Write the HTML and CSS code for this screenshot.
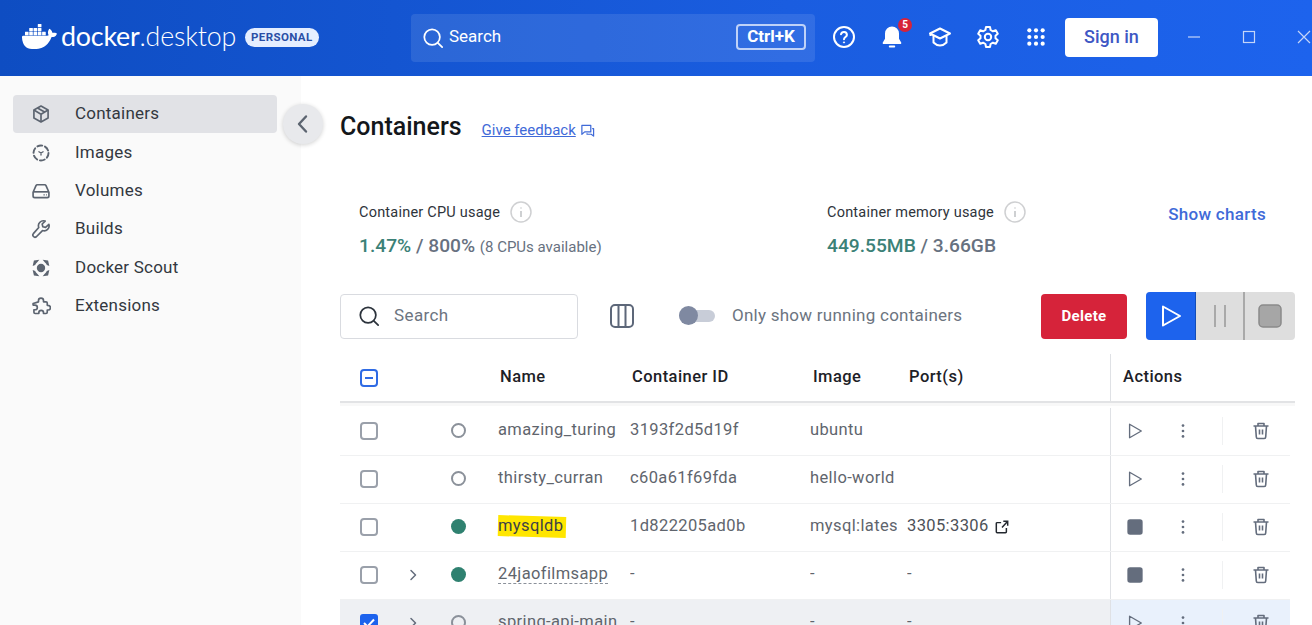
FILE: index.html
```html
<!DOCTYPE html>
<html lang="en">
<head>
<meta charset="utf-8">
<title>Docker Desktop</title>
<link rel="stylesheet" href="styles.css">
</head>
<body>
<header class="topbar">
  <div class="brand">
    <svg class="whale" viewBox="0 0 24 24"><path fill="#fff" d="M13.983 11.078h2.119a.186.186 0 00.186-.185V9.006a.186.186 0 00-.186-.186h-2.119a.185.185 0 00-.185.185v1.888c0 .102.083.185.185.185m-2.954-5.43h2.118a.186.186 0 00.186-.186V3.574a.186.186 0 00-.186-.185h-2.118a.185.185 0 00-.185.185v1.888c0 .102.082.185.185.185m0 2.716h2.118a.187.187 0 00.186-.186V6.29a.186.186 0 00-.186-.185h-2.118a.185.185 0 00-.185.185v1.887c0 .102.082.185.185.186m-2.93 0h2.12a.186.186 0 00.184-.186V6.29a.185.185 0 00-.185-.185H8.1a.185.185 0 00-.185.185v1.887c0 .102.083.185.185.186m-2.964 0h2.119a.186.186 0 00.185-.186V6.29a.185.185 0 00-.185-.185H5.136a.186.186 0 00-.186.185v1.887c0 .102.084.185.186.186m5.893 2.715h2.118a.186.186 0 00.186-.185V9.006a.186.186 0 00-.186-.186h-2.118a.185.185 0 00-.185.185v1.888c0 .102.082.185.185.185m-2.93 0h2.12a.185.185 0 00.184-.185V9.006a.185.185 0 00-.184-.186h-2.12a.185.185 0 00-.184.185v1.888c0 .102.083.185.185.185m-2.964 0h2.119a.185.185 0 00.185-.185V9.006a.185.185 0 00-.184-.186h-2.12a.186.186 0 00-.186.186v1.887c0 .102.084.185.186.185m-2.92 0h2.12a.185.185 0 00.184-.185V9.006a.185.185 0 00-.184-.186h-2.12a.185.185 0 00-.184.185v1.888c0 .102.082.185.185.185M23.763 9.89c-.065-.051-.672-.51-1.954-.51-.338.001-.676.03-1.01.087-.248-1.7-1.653-2.53-1.716-2.566l-.344-.199-.226.327c-.284.438-.49.922-.612 1.43-.23.97-.09 1.882.403 2.661-.595.332-1.55.413-1.744.42H.751a.751.751 0 00-.75.748 11.376 11.376 0 00.692 4.062c.545 1.428 1.355 2.48 2.41 3.124 1.18.723 3.1 1.137 5.275 1.137.983.003 1.963-.086 2.93-.266a12.248 12.248 0 003.823-1.389c.98-.567 1.86-1.288 2.61-2.136 1.252-1.418 1.998-2.997 2.553-4.4h.221c1.372 0 2.215-.549 2.68-1.009.309-.293.55-.65.707-1.046l.098-.288Z"/></svg>
    <span class="wordmark"><span class="wordmark-strong">docker</span>.desktop</span>
    <span class="plan">PERSONAL</span>
  </div>
  <div class="global-search">
    <svg class="ico-22" viewBox="0 0 24 24" fill="none" stroke="#fff" stroke-width="1.9"><circle cx="11" cy="11" r="8.500"/><path d="M17.500 17.500l4.500 4.500" stroke-linecap="round"/></svg>
    <span class="global-search-label">Search</span>
    <span class="kbd">Ctrl+K</span>
  </div>
  <div class="top-icons">
    <span class="top-icon"><svg class="ico-24" viewBox="0 0 24 24" fill="none" stroke="#fff" stroke-width="2"><circle cx="12" cy="12" r="10"/><path d="M9 9.300a3 3 0 0 1 5.900.6c0 2-2.900 2.400-2.900 4.400" stroke-linecap="round"/><circle cx="12" cy="17.400" r=".6" fill="#fff" stroke-width="1"/></svg></span>
    <span class="top-icon"><svg class="ico-24" viewBox="0 0 24 24" fill="#fff"><path d="M12 1.500a7 7 0 0 0-7 7v5.200L2.800 17.400c-.4.7 0 1.600.9 1.600h16.600c.9 0 1.300-.9.9-1.600L19 13.700V8.500a7 7 0 0 0-7-7z"/><rect x="8.800" y="20.600" width="6.400" height="1.800" rx=".9"/></svg><span class="bell-badge">5</span></span>
    <span class="top-icon"><svg class="ico-24" viewBox="0 0 24 24" fill="none" stroke="#fff" stroke-width="2" stroke-linejoin="round"><path d="M12 3.500L22 8.500 12 13.500 2 8.500z"/><path d="M5.500 11v6.500c2 2 4.200 3 6.500 3s4.500-1 6.500-3V11"/><path d="M2.500 8.500L2.500 11"/></svg></span>
    <span class="top-icon"><svg class="ico-24" viewBox="0 0 24 24" fill="none" stroke="#fff" stroke-width="2" stroke-linejoin="round"><circle cx="12" cy="12" r="3.200"/><path d="M10 2h4l.6 3 2.300 1.300 2.900-1 2 3.500-2.300 2v2.400l2.300 2-2 3.500-2.900-1-2.300 1.300-.6 3h-4l-.6-3-2.300-1.300-2.900 1-2-3.500 2.300-2v-2.400l-2.300-2 2-3.500 2.900 1L9.400 5z"/></svg></span>
    <span class="top-icon"><svg class="ico-20" viewBox="0 0 24 24" fill="#fff"><circle cx="4" cy="4" r="2.500"/><circle cx="12" cy="4" r="2.500"/><circle cx="20" cy="4" r="2.500"/><circle cx="4" cy="12" r="2.500"/><circle cx="12" cy="12" r="2.500"/><circle cx="20" cy="12" r="2.500"/><circle cx="4" cy="20" r="2.500"/><circle cx="12" cy="20" r="2.500"/><circle cx="20" cy="20" r="2.500"/></svg></span>
  </div>
  <button class="signin">Sign in</button>
  <div class="window-controls">
    <span class="win"><svg class="ico-14" viewBox="0 0 14 14" stroke="#c4d5f8" stroke-width="1.200"><path d="M1 7h12"/></svg></span>
    <span class="win"><svg class="ico-14" viewBox="0 0 14 14" fill="none" stroke="#c4d5f8" stroke-width="1.200"><rect x="1.500" y="1.500" width="11" height="11"/></svg></span>
    <span class="win"><svg class="ico-14" viewBox="0 0 14 14" stroke="#c4d5f8" stroke-width="1.200"><path d="M1 1l12 12M13 1L1 13"/></svg></span>
  </div>
</header>

<div class="shell">
  <nav class="sidebar">
    <a class="nav-item nav-active"><svg class="nav-ico" viewBox="0 0 24 24" fill="none" stroke="#5c6470" stroke-width="2" stroke-linejoin="round"><path d="M12 2.500l8.500 4.700v9.600L12 21.500l-8.500-4.700V7.200z"/><path d="M3.500 7.200l8.500 5 8.500-5M12 12.200v9.300M7.800 4.900l8.500 4.800"/></svg><span class="nav-label">Containers</span></a>
    <a class="nav-item"><svg class="nav-ico" viewBox="0 0 24 24" fill="none" stroke="#5c6470" stroke-width="2.300" stroke-linecap="round"><circle cx="12" cy="12" r="9" stroke-dasharray="6 3.420"/><path d="M9.500 10.500l2.500 1.500 2.500-1.500M12 12v2.500" stroke-width="1.600"/></svg><span class="nav-label">Images</span></a>
    <a class="nav-item"><svg class="nav-ico" viewBox="0 0 24 24" fill="none" stroke="#5c6470" stroke-width="2" stroke-linejoin="round"><path d="M2.500 13.500L6 5.500c.3-.6.800-1 1.500-1h9c.7 0 1.200.4 1.500 1l3.500 8v4.500a2 2 0 0 1-2 2h-15a2 2 0 0 1-2-2z"/><path d="M2.500 13h19"/><path d="M15 16.500h1.500M18 16.500h1" stroke-width="1.500"/></svg><span class="nav-label">Volumes</span></a>
    <a class="nav-item"><svg class="nav-ico" viewBox="0 0 24 24" fill="none" stroke="#5c6470" stroke-width="2" stroke-linejoin="round"><path d="M21.500 6.500l-4 3.600-3.300-.8-.8-3.300 3.600-3.500a6 6 0 0 0-7.700 7.700L2.800 17.600a2.600 2.600 0 0 0 3.600 3.700l7.400-7.400a6 6 0 0 0 7.700-7.400z"/></svg><span class="nav-label">Builds</span></a>
    <a class="nav-item"><svg class="nav-ico" viewBox="0 0 24 24" fill="#5c6470"><circle cx="12" cy="12" r="5"/><path d="M2 9.500L3.500 3 10 2 7.500 5 6 6.500 5 8.500zM22 9.500L20.500 3 14 2l2.500 3L18 6.500l1 2zM2 14.500L3.500 21l6.500 1-2.500-3L6 17.500l-1-2zM22 14.500L20.500 21 14 22l2.500-3 1.500-1.500 1-2z"/></svg><span class="nav-label">Docker Scout</span></a>
    <a class="nav-item"><svg class="nav-ico" viewBox="0 0 24 24" fill="none" stroke="#5c6470" stroke-width="2" stroke-linejoin="round"><path d="M9 5.500a3 3 0 0 1 6 0V7h3a1.500 1.500 0 0 1 1.500 1.500v2.700h1a2.800 2.800 0 0 1 0 5.600h-1v2.700A1.500 1.500 0 0 1 18 21h-3v-1a2.800 2.800 0 0 0-5.600 0v1H5a1.500 1.500 0 0 1-1.500-1.500v-3h1.300a2.800 2.800 0 0 0 0-5.600H2.500V9L9 7z"/></svg><span class="nav-label">Extensions</span></a>
  </nav>

  <button class="collapse"><svg class="ico-24" viewBox="0 0 24 24" fill="none" stroke="#5c6470" stroke-width="2.400" stroke-linecap="round" stroke-linejoin="round"><path d="M15 4.500L8 12l7 7.500"/></svg></button>

  <main class="content">
    <div class="title-row">
      <h1 class="page-title">Containers</h1>
      <a class="feedback">Give feedback</a>
      <svg class="feedback-ico" viewBox="0 0 16 16" fill="none" stroke="#3f6ad8" stroke-width="1.300" stroke-linejoin="round"><path d="M2 2.500h9.500v7H5L2 12z"/><path d="M13 6h1.500v8L12 12H7.500v-1"/></svg>
    </div>

    <section class="stats">
      <div class="stat stat-cpu">
        <div class="stat-label">Container CPU usage <svg class="info" viewBox="0 0 22 22" fill="none"><circle cx="11" cy="11" r="10" stroke="#cfd0d2" stroke-width="1.500"/><path d="M11 10v6M11 6.500v1" stroke="#bfc1c4" stroke-width="1.500"/></svg></div>
        <div class="stat-value"><span class="good">1.47%</span> <span class="slash">/ 800%</span> <small class="stat-note">(8 CPUs available)</small></div>
      </div>
      <div class="stat stat-mem">
        <div class="stat-label">Container memory usage <svg class="info" viewBox="0 0 22 22" fill="none"><circle cx="11" cy="11" r="10" stroke="#cfd0d2" stroke-width="1.500"/><path d="M11 10v6M11 6.500v1" stroke="#bfc1c4" stroke-width="1.500"/></svg></div>
        <div class="stat-value"><span class="good">449.55MB</span> <span class="slash">/ 3.66GB</span></div>
      </div>
      <a class="show-charts">Show charts</a>
    </section>

    <section class="toolbar">
      <div class="search-box">
        <svg class="ico-22" viewBox="0 0 24 24" fill="none" stroke="#2c333c" stroke-width="1.900"><circle cx="11" cy="11" r="8.500"/><path d="M17.500 17.500l4.500 4.500" stroke-linecap="round"/></svg>
        <span class="search-placeholder">Search</span>
      </div>
      <svg class="columns-ico" viewBox="0 0 24 24" fill="none" stroke="#5d6779" stroke-width="2"><rect x="1" y="1" width="22" height="22" rx="4"/><path d="M8.500 1v22M15.500 1v22"/></svg>
      <span class="toggle"><span class="toggle-thumb"></span></span>
      <span class="toggle-label">Only show running containers</span>
      <button class="delete">Delete</button>
      <div class="bulk">
        <span class="bulk-btn bulk-play"><svg class="ico-24" viewBox="0 0 24 24" fill="none" stroke="#fff" stroke-width="2" stroke-linejoin="round"><path d="M4 2.500L21 12 4 21.500z"/></svg></span>
        <span class="bulk-btn bulk-pause"><svg class="ico-24" viewBox="0 0 24 24" stroke="#a9a9a9" stroke-width="2"><path d="M7 1v22M17 1v22"/></svg></span>
        <span class="bulk-btn"><svg class="ico-24" viewBox="0 0 24 24" fill="#a6a6a6" stroke="#8a8a8a" stroke-width="1.500"><rect x="1" y="1" width="22" height="22" rx="4"/></svg></span>
      </div>
    </section>

    <section class="table">
      <div class="t-row t-head">
        <span class="cell-check"><svg class="check" viewBox="0 0 18 18" fill="none"><rect x="1" y="1" width="16" height="16" rx="3" stroke="#2f6be4" stroke-width="2"/><path d="M5 9h8" stroke="#2f6be4" stroke-width="2"/></svg></span>
        <span></span><span></span>
        <span class="th th-name">Name</span>
        <span class="th">Container ID</span>
        <span class="th th-image">Image</span>
        <span class="th">Port(s)</span>
        <span class="th th-actions">Actions</span>
      </div>

      <div class="t-row t-body">
        <span class="cell-check"><svg class="check" viewBox="0 0 18 18" fill="none"><rect x="1" y="1" width="16" height="16" rx="3" stroke="#9aa0aa" stroke-width="2"/></svg></span>
        <span></span>
        <span class="cell-status"><span class="dot dot-off"></span></span>
        <span class="td td-name">amazing_turing</span>
        <span class="td">3193f2d5d19f</span>
        <span class="td td-image">ubuntu</span>
        <span class="td"></span>
        <span class="cell-actions">
          <svg class="act" viewBox="0 0 20 20" fill="none" stroke="#646d7d" stroke-width="1.500" stroke-linejoin="round"><path d="M4 2.500L17 10 4 17.500z"/></svg>
          <svg class="act act-more" viewBox="0 0 20 20" fill="#646d7d"><circle cx="10" cy="4" r="1.500"/><circle cx="10" cy="10" r="1.500"/><circle cx="10" cy="16" r="1.500"/></svg>
          <span class="act-sep"></span>
          <svg class="act act-trash" viewBox="0 0 20 20" fill="none" stroke="#646d7d" stroke-width="1.600" stroke-linejoin="round"><path d="M2.500 5h15M7 5V2.500h6V5M4.500 5l.8 11c0 1 .7 1.500 1.500 1.500h6.400c.8 0 1.500-.5 1.500-1.500l.8-11M8.500 8.500v5M11.500 8.500v5"/></svg>
        </span>
      </div>

      <div class="t-row t-body">
        <span class="cell-check"><svg class="check" viewBox="0 0 18 18" fill="none"><rect x="1" y="1" width="16" height="16" rx="3" stroke="#9aa0aa" stroke-width="2"/></svg></span>
        <span></span>
        <span class="cell-status"><span class="dot dot-off"></span></span>
        <span class="td td-name">thirsty_curran</span>
        <span class="td">c60a61f69fda</span>
        <span class="td td-image">hello-world</span>
        <span class="td"></span>
        <span class="cell-actions">
          <svg class="act" viewBox="0 0 20 20" fill="none" stroke="#646d7d" stroke-width="1.500" stroke-linejoin="round"><path d="M4 2.500L17 10 4 17.500z"/></svg>
          <svg class="act act-more" viewBox="0 0 20 20" fill="#646d7d"><circle cx="10" cy="4" r="1.500"/><circle cx="10" cy="10" r="1.500"/><circle cx="10" cy="16" r="1.500"/></svg>
          <span class="act-sep"></span>
          <svg class="act act-trash" viewBox="0 0 20 20" fill="none" stroke="#646d7d" stroke-width="1.600" stroke-linejoin="round"><path d="M2.500 5h15M7 5V2.500h6V5M4.500 5l.8 11c0 1 .7 1.500 1.500 1.500h6.400c.8 0 1.500-.5 1.500-1.500l.8-11M8.500 8.500v5M11.500 8.500v5"/></svg>
        </span>
      </div>

      <div class="t-row t-body">
        <span class="cell-check"><svg class="check" viewBox="0 0 18 18" fill="none"><rect x="1" y="1" width="16" height="16" rx="3" stroke="#9aa0aa" stroke-width="2"/></svg></span>
        <span></span>
        <span class="cell-status"><span class="dot dot-on"></span></span>
        <span class="td td-name"><span class="marked">mysqldb</span></span>
        <span class="td">1d822205ad0b</span>
        <span class="td td-image">mysql:latest</span>
        <span class="td td-port">3305:3306 <svg class="ext" viewBox="0 0 16 16" fill="none" stroke="#23282f" stroke-width="1.700"><path d="M7 3H2.500A1 1 0 0 0 1.500 4v9.500a1 1 0 0 0 1 1H12a1 1 0 0 0 1-1V9M8 8.500L14.500 1.500M9.500 1.500h5v5"/></svg></span>
        <span class="cell-actions">
          <svg class="act" viewBox="0 0 20 20" fill="#646d7d"><rect x="1.500" y="1.500" width="17" height="17" rx="3"/></svg>
          <svg class="act act-more" viewBox="0 0 20 20" fill="#646d7d"><circle cx="10" cy="4" r="1.500"/><circle cx="10" cy="10" r="1.500"/><circle cx="10" cy="16" r="1.500"/></svg>
          <span class="act-sep"></span>
          <svg class="act act-trash" viewBox="0 0 20 20" fill="none" stroke="#646d7d" stroke-width="1.600" stroke-linejoin="round"><path d="M2.500 5h15M7 5V2.500h6V5M4.500 5l.8 11c0 1 .7 1.500 1.500 1.500h6.400c.8 0 1.500-.5 1.500-1.500l.8-11M8.500 8.500v5M11.500 8.500v5"/></svg>
        </span>
      </div>

      <div class="t-row t-body">
        <span class="cell-check"><svg class="check" viewBox="0 0 18 18" fill="none"><rect x="1" y="1" width="16" height="16" rx="3" stroke="#9aa0aa" stroke-width="2"/></svg></span>
        <span class="cell-chev"><svg class="chev" viewBox="0 0 10 12" fill="none" stroke="#646d7d" stroke-width="1.500" stroke-linecap="round" stroke-linejoin="round"><path d="M3 1.500L7.500 6 3 10.500"/></svg></span>
        <span class="cell-status"><span class="dot dot-on"></span></span>
        <span class="td td-name"><span class="compose">24jaofilmsapp</span></span>
        <span class="td">-</span>
        <span class="td td-image">-</span>
        <span class="td">-</span>
        <span class="cell-actions">
          <svg class="act" viewBox="0 0 20 20" fill="#646d7d"><rect x="1.500" y="1.500" width="17" height="17" rx="3"/></svg>
          <svg class="act act-more" viewBox="0 0 20 20" fill="#646d7d"><circle cx="10" cy="4" r="1.500"/><circle cx="10" cy="10" r="1.500"/><circle cx="10" cy="16" r="1.500"/></svg>
          <span class="act-sep"></span>
          <svg class="act act-trash" viewBox="0 0 20 20" fill="none" stroke="#646d7d" stroke-width="1.600" stroke-linejoin="round"><path d="M2.500 5h15M7 5V2.500h6V5M4.500 5l.8 11c0 1 .7 1.500 1.500 1.500h6.400c.8 0 1.500-.5 1.500-1.500l.8-11M8.500 8.500v5M11.500 8.500v5"/></svg>
        </span>
      </div>

      <div class="t-row t-body t-selected">
        <span class="cell-check"><svg class="check" viewBox="0 0 18 18"><rect width="18" height="18" rx="3" fill="#1d63ed"/><path d="M4 9l3.500 3.500L14 5.500" fill="none" stroke="#fff" stroke-width="2"/></svg></span>
        <span class="cell-chev"><svg class="chev" viewBox="0 0 10 12" fill="none" stroke="#646d7d" stroke-width="1.500" stroke-linecap="round" stroke-linejoin="round"><path d="M3 1.500L7.500 6 3 10.500"/></svg></span>
        <span class="cell-status"><span class="dot dot-off"></span></span>
        <span class="td td-name">spring-api-main</span>
        <span class="td">-</span>
        <span class="td td-image">-</span>
        <span class="td">-</span>
        <span class="cell-actions">
          <svg class="act" viewBox="0 0 20 20" fill="none" stroke="#646d7d" stroke-width="1.500" stroke-linejoin="round"><path d="M4 2.500L17 10 4 17.500z"/></svg>
          <svg class="act act-more" viewBox="0 0 20 20" fill="#646d7d"><circle cx="10" cy="4" r="1.500"/><circle cx="10" cy="10" r="1.500"/><circle cx="10" cy="16" r="1.500"/></svg>
          <span class="act-sep"></span>
          <svg class="act act-trash" viewBox="0 0 20 20" fill="none" stroke="#646d7d" stroke-width="1.600" stroke-linejoin="round"><path d="M2.500 5h15M7 5V2.500h6V5M4.500 5l.8 11c0 1 .7 1.500 1.500 1.500h6.400c.8 0 1.500-.5 1.500-1.500l.8-11M8.500 8.500v5M11.500 8.500v5"/></svg>
        </span>
      </div>
    </section>
  </main>
</div>
</body>
</html>
```

FILE: styles.css
```css
* { box-sizing: border-box; }
html, body { margin: 0; height: 625px; overflow: hidden; }
body { font-family: Roboto, "Liberation Sans", sans-serif; color: #23282f; background: #fff; display: flex; flex-direction: column; }
button { font-family: inherit; border: 0; padding: 0; }

.ico-24 { width: 24px; height: 24px; display: block; flex: none; }
.ico-22 { width: 22px; height: 22px; display: block; flex: none; }
.ico-20 { width: 20px; height: 20px; display: block; flex: none; }
.ico-14 { width: 14px; height: 14px; display: block; }

/* top bar */
.topbar { height: 76px; flex: none; display: flex; align-items: center; padding-left: 22px; background: linear-gradient(90deg, #0e4dc2 0%, #1a5de0 60%, #1d63ed 100%); color: #fff; }
.brand { width: 389px; display: flex; align-items: center; flex: none; padding-bottom: 1px; }
.whale { width: 35px; height: 35px; flex: none; margin-bottom: 2px; }
.wordmark { font-family: Lato, sans-serif; font-size: 26.800px; font-weight: 300; margin-left: 4px; padding-bottom: 3px; letter-spacing: -.2px; }
.wordmark-strong { font-weight: 400; }
.plan { margin-left: 9px; height: 19px; padding: 0 6px; border-radius: 10px; background: #e5eeff; color: #2a4ea6; font-size: 11.500px; font-weight: 700; line-height: 19px; letter-spacing: .4px; }
.global-search { width: 404px; height: 48px; flex: none; display: flex; align-items: center; padding: 0 9px 0 11px; border-radius: 4px; background: rgba(255,255,255,.1); }
.global-search-label { margin-left: 5px; padding-bottom: 4px; font-size: 17px; }
.kbd { margin-left: auto; height: 26px; width: 70px; border: 2px solid #bfd2f8; border-radius: 4px; text-align: center; font-size: 17px; font-weight: 700; line-height: 20px; margin-bottom: 2px; }
.top-icons { margin-left: 5px; display: flex; flex: none; margin-bottom: 2px; }
.top-icon { position: relative; width: 48px; height: 48px; display: flex; align-items: center; justify-content: center; }
.bell-badge { position: absolute; left: 30px; top: 5px; width: 14px; height: 14px; border-radius: 50%; background: #d6233a; color: #fff; font-size: 10px; font-weight: 700; line-height: 14px; text-align: center; }
.signin { margin-left: 5px; margin-bottom: 1px; padding-bottom: 3px; width: 93px; height: 39px; flex: none; border-radius: 4px; background: #fff; color: #3e57c4; font-size: 18px; font-weight: 500; }
.window-controls { margin-left: 8px; display: flex; flex: none; margin-bottom: 3px; }
.win { width: 55px; display: flex; align-items: center; justify-content: center; }

/* shell */
.shell { position: relative; flex: 1; display: flex; min-height: 0; }
.sidebar { width: 301px; flex: none; padding: 19px 24px 0 13px; background: #fafafa; }
.nav-item { height: 38.4px; display: flex; align-items: center; padding-left: 18px; border-radius: 4px; font-size: 17px; letter-spacing: .22px; color: #33383f; }
.nav-label { padding-bottom: 2px; }
.nav-active { background: #e1e2e6; }
.nav-ico { width: 20px; height: 20px; margin-right: 24px; flex: none; }
.collapse { position: absolute; left: 283px; top: 28px; width: 40px; height: 40px; display: flex; align-items: center; justify-content: center; border-radius: 50%; background: #e8e9ec; box-shadow: 0 1px 4px rgba(0,0,0,.18); }

/* content */
.content { flex: 1; min-width: 0; padding: 30px 17px 0 39px; }
.title-row { height: 40px; display: flex; align-items: center; }
.page-title { margin: 0; font-size: 25px; font-weight: 500; color: #14171b; }
.feedback { margin-left: 20px; margin-top: 7px; font-size: 15px; color: #3f6ad8; text-decoration: underline; }
.feedback-ico { width: 15px; height: 15px; margin: 8px 0 0 4px; }

.stats { display: flex; margin-top: 56px; padding: 0 29px 0 19px; }
.stat-cpu { width: 468px; }
.stat-label { height: 20px; display: flex; align-items: center; gap: 10px; font-size: 14.500px; letter-spacing: .22px; color: #2e343b; }
.info { width: 22px; height: 22px; flex: none; }
.stat-value { margin-top: 10px; height: 28px; line-height: 28px; font-size: 19.200px; font-weight: 500; color: #677180; white-space: nowrap; }
.good { color: #3b8177; }
.stat-note { font-size: 15px; font-weight: 400; }
.show-charts { margin-left: auto; margin-top: 2px; font-size: 17px; font-weight: 500; letter-spacing: .3px; color: #3f6ad8; }

.toolbar { display: flex; align-items: center; height: 48px; margin-top: 32px; }
.search-box { width: 238px; height: 45px; flex: none; display: flex; align-items: center; padding-left: 17px; border: 1px solid #d9dbe0; border-radius: 4px; }
.search-placeholder { margin-left: 14px; padding-bottom: 2px; font-size: 17px; letter-spacing: .4px; color: #6c7480; }
.columns-ico { width: 24px; height: 24px; margin-left: 32px; flex: none; }
.toggle { position: relative; width: 36px; height: 12px; margin-left: 45px; flex: none; border-radius: 6px; background: #c8cdd8; }
.toggle-thumb { position: absolute; left: 0; top: -4px; width: 19px; height: 19px; border-radius: 50%; background: #7f89a1; }
.toggle-label { margin-left: 17px; padding-bottom: 2px; font-size: 17px; letter-spacing: .25px; color: #6c7480; white-space: nowrap; }
.delete { margin-left: auto; width: 86px; height: 45px; flex: none; border-radius: 4px; background: #d6233a; color: #fff; font-size: 15px; font-weight: 700; letter-spacing: .3px; }
.bulk { margin-left: 19px; height: 48px; display: flex; flex: none; border-radius: 4px; overflow: hidden; background: #dedede; }
.bulk-btn { width: 50px; display: flex; align-items: center; justify-content: center; }
.bulk-play { background: #1d63ed; border-right: 1px solid #124db8; }
.bulk-pause { width: 49px; border-right: 2px solid #a9a9a9; }

/* table */
.table { position: relative; margin-top: 14px; }
.t-row { display: grid; grid-template-columns: 58px 30px 60px 142px 180px 97px 203px 185px; align-items: center; }
.t-head { height: 49px; border-bottom: 2px solid #e2e3e5; margin-bottom: 5px; box-shadow: 0 3px 0 #f8f8f8; }
.t-body { height: 48px; width: 950px; border-bottom: 1px solid #f0f1f2; grid-template-columns: 58px 30px 60px 142px 180px 97px 203px 180px; }
.t-selected { background: #eef0f3; }
.cell-check, .cell-chev, .cell-status { display: flex; justify-content: center; align-items: center; }
.t-body .cell-check, .t-body .cell-chev, .t-body .cell-status { padding-bottom: 2px; }
.check { width: 18px; height: 18px; display: block; }
.chev { width: 10px; height: 12px; display: block; }
.dot { width: 15px; height: 15px; border-radius: 50%; display: block; }
.dot-off { border: 2px solid #8b919a; }
.dot-on { background: #2f8170; }
.th { padding-left: 2px; padding-bottom: 3px; font-size: 16.500px; font-weight: 500; letter-spacing: .45px; color: #1d2127; white-space: nowrap; }
.th-name { padding-left: 12px; }
.th-image { padding-left: 3px; }
.th-actions { height: 100%; display: flex; align-items: center; padding-left: 12px; border-left: 1px solid #dfe1e5; }
.td { padding-bottom: 4px; font-size: 16.500px; letter-spacing: .38px; color: #5f656d; white-space: nowrap; overflow: hidden; }
.td-name { padding-left: 10px; overflow: visible; }
.td-image { margin-right: 10px; }
.td-port { display: flex; align-items: center; gap: 6px; color: #4c5158; overflow: visible; }
.ext { width: 14px; height: 14px; flex: none; margin-top: 3px; }
.marked { position: relative; color: #3d4148; z-index: 0; }
.marked::before { content: ""; position: absolute; z-index: -1; left: 0; right: -3px; top: 0; bottom: -2px; background: #ffe600; transform: rotate(1.500deg); }
.compose { border-bottom: 1px dashed #8b919a; }
.cell-actions { height: 100%; display: flex; align-items: center; padding-bottom: 2px; border-left: 1px solid #dfe1e5; }
.t-selected .cell-actions { background: #e9f1fc; }
.act { width: 18px; height: 18px; flex: none; margin-left: 15px; }
.act-more { margin-left: 30px; }
.act-sep { width: 1px; height: 28px; margin-left: 30px; background: #f0f1f2; flex: none; }
.act-trash { width: 20px; height: 20px; margin-left: 28px; }
```
